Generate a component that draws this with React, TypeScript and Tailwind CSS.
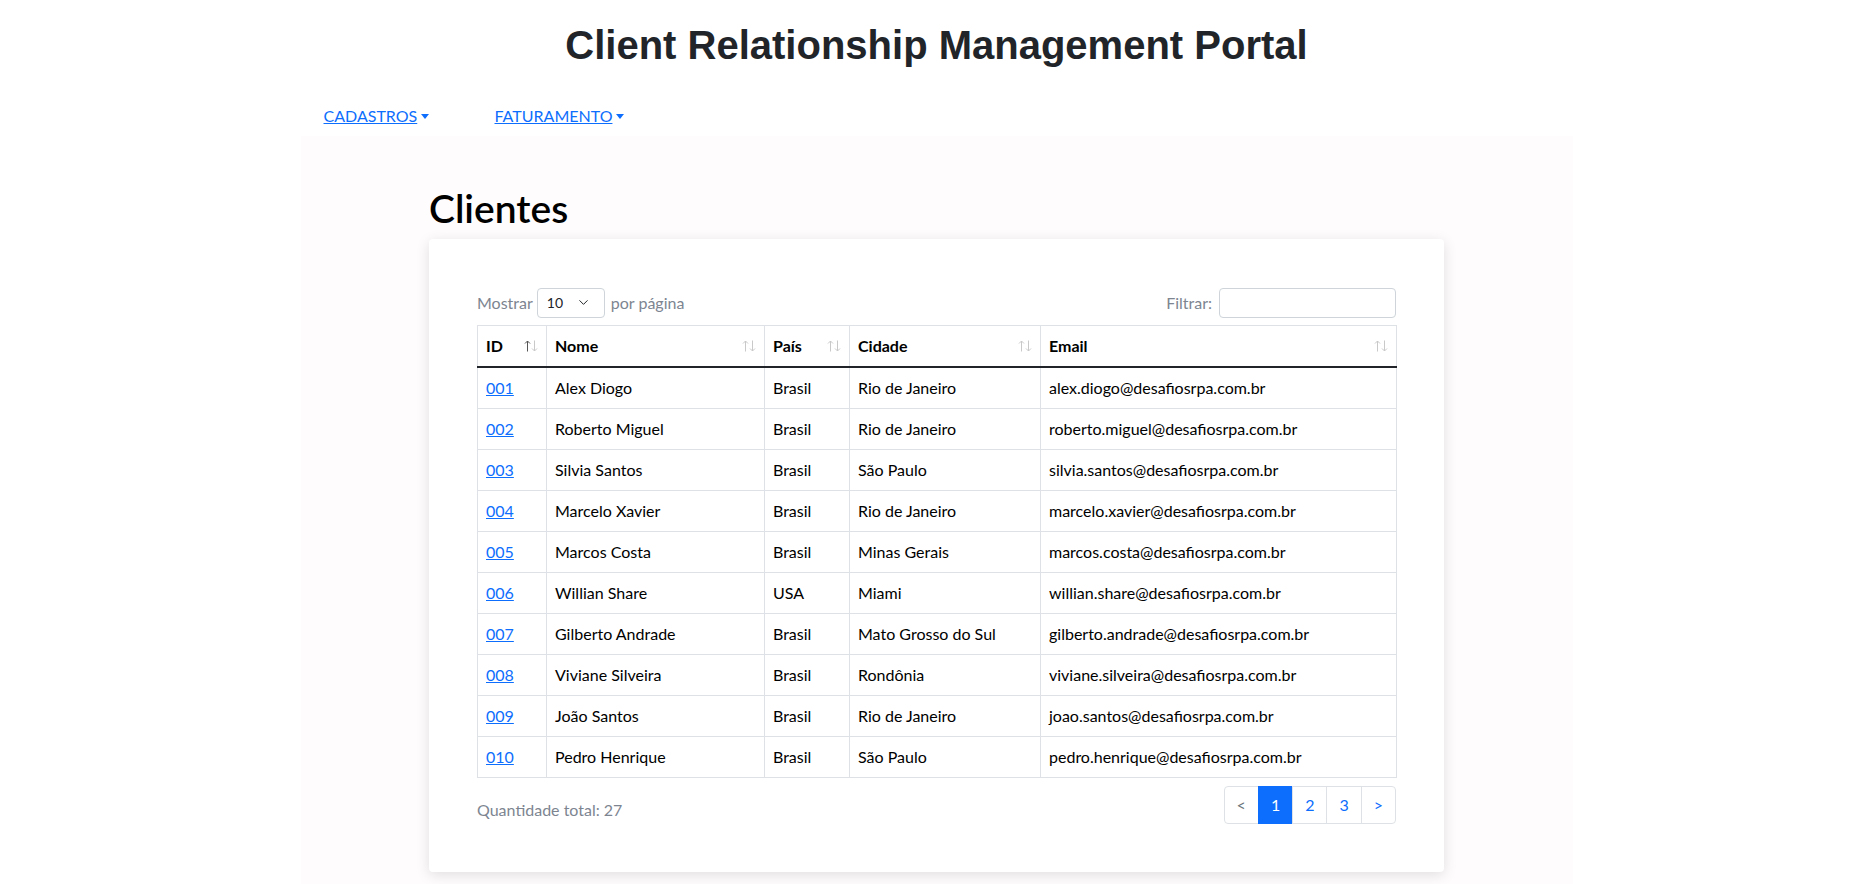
import { ChevronDown } from "lucide-react";

type Cliente = {
  id: string;
  nome: string;
  pais: string;
  cidade: string;
  email: string;
};

const clientes: Cliente[] = [
  { id: "001", nome: "Alex Diogo", pais: "Brasil", cidade: "Rio de Janeiro", email: "alex.diogo@desafiosrpa.com.br" },
  { id: "002", nome: "Roberto Miguel", pais: "Brasil", cidade: "Rio de Janeiro", email: "roberto.miguel@desafiosrpa.com.br" },
  { id: "003", nome: "Silvia Santos", pais: "Brasil", cidade: "São Paulo", email: "silvia.santos@desafiosrpa.com.br" },
  { id: "004", nome: "Marcelo Xavier", pais: "Brasil", cidade: "Rio de Janeiro", email: "marcelo.xavier@desafiosrpa.com.br" },
  { id: "005", nome: "Marcos Costa", pais: "Brasil", cidade: "Minas Gerais", email: "marcos.costa@desafiosrpa.com.br" },
  { id: "006", nome: "Willian Share", pais: "USA", cidade: "Miami", email: "willian.share@desafiosrpa.com.br" },
  { id: "007", nome: "Gilberto Andrade", pais: "Brasil", cidade: "Mato Grosso do Sul", email: "gilberto.andrade@desafiosrpa.com.br" },
  { id: "008", nome: "Viviane Silveira", pais: "Brasil", cidade: "Rondônia", email: "viviane.silveira@desafiosrpa.com.br" },
  { id: "009", nome: "João Santos", pais: "Brasil", cidade: "Rio de Janeiro", email: "joao.santos@desafiosrpa.com.br" },
  { id: "010", nome: "Pedro Henrique", pais: "Brasil", cidade: "São Paulo", email: "pedro.henrique@desafiosrpa.com.br" },
];

const columns = [
  { label: "ID", width: "w-[69px]", active: true },
  { label: "Nome", width: "w-[218px]", active: false },
  { label: "País", width: "w-[85px]", active: false },
  { label: "Cidade", width: "w-[191px]", active: false },
  { label: "Email", width: "w-[356px]", active: false },
];

function SortIcon({ active }: { active: boolean }) {
  const up = active ? "#555555" : "#c9c9c9";
  return (
    <svg width="14" height="12" viewBox="0 0 14 12" fill="none" strokeWidth="1">
      <path d="M3.5 11.5V1M1 3.5L3.5 1L6 3.5" stroke={up} />
      <path d="M10.5 0.5V11M8 8.5L10.5 11L13 8.5" stroke="#c9c9c9" />
    </svg>
  );
}

function NavItem({ label, className }: { label: string; className: string }) {
  return (
    <div className={className}>
      <a href="#" className="text-[#0d6efd] underline">
        {label}
      </a>
      <span className="ml-[4px] inline-block border-x-[4px] border-t-[5px] border-x-transparent border-t-[#0d6efd] align-[3px]" />
    </div>
  );
}

export default function App() {
  return (
    <div className="min-h-screen bg-white text-[#212529] font-['Lato','Noto_Sans',sans-serif]">
      <header>
        <h1 className="pt-[21px] text-center font-['Liberation_Sans',Arial,sans-serif] text-[40px] leading-[48px] font-bold text-[#212529]">
          Client Relationship Management Portal
        </h1>
        <nav className="mx-auto mt-[27px] flex w-[1272px] py-2 text-[16px] leading-6">
          <NavItem label="CADASTROS" className="ml-[23px] w-[171px]" />
          <NavItem label="FATURAMENTO" className="" />
        </nav>
      </header>

      <main className="mx-auto min-h-[748px] w-[1272px] bg-[#fffcfd] pt-12 pb-12">
        <div className="mx-auto w-[1015px]">
          <h1 className="mb-[7px] text-[39px] leading-[48px] font-semibold text-black">Clientes</h1>

          <div className="rounded-[4px] bg-white p-12 shadow-[0_3px_14px_rgba(0,0,0,0.12)]">
            <div className="mb-[7px] flex h-[31px] items-center justify-between text-[16px] text-[#7d8591]">
              <div className="flex items-center">
                <span>Mostrar</span>
                <div className="ml-[4px] mr-[6px] flex h-[30px] w-[68px] items-center justify-between rounded-[4px] border border-[#ced4da] pl-[9px] pr-[13px] text-[14px] text-[#212529]">
                  <span>10</span>
                  <ChevronDown size={15} strokeWidth={1.6} />
                </div>
                <span>por página</span>
              </div>
              <div className="flex items-center">
                <span className="mr-[7px]">Filtrar:</span>
                <input className="h-[30px] w-[177px] rounded-[4px] border border-[#ced4da] bg-white outline-none" />
              </div>
            </div>

            <table className="w-[919px] table-fixed border-collapse text-[16px] leading-6">
              <colgroup>
                {columns.map((c) => (
                  <col key={c.label} className={c.width} />
                ))}
              </colgroup>
              <thead>
                <tr className="border-b-2 border-b-[#212529]">
                  {columns.map((c) => (
                    <th key={c.label} className="border-x border-t border-[#dee2e6] p-2 text-left font-bold text-black">
                      <div className="flex items-center justify-between">
                        <span>{c.label}</span>
                        <SortIcon active={c.active} />
                      </div>
                    </th>
                  ))}
                </tr>
              </thead>
              <tbody>
                {clientes.map((c) => (
                  <tr key={c.id} className="text-black">
                    <td className="border border-[#dee2e6] p-2">
                      <a href="#" className="text-[#0d6efd] underline">
                        {c.id}
                      </a>
                    </td>
                    <td className="border border-[#dee2e6] p-2">{c.nome}</td>
                    <td className="border border-[#dee2e6] p-2">{c.pais}</td>
                    <td className="border border-[#dee2e6] p-2">{c.cidade}</td>
                    <td className="border border-[#dee2e6] p-2">{c.email}</td>
                  </tr>
                ))}
              </tbody>
            </table>

            <div className="mt-[8px] flex items-end justify-between">
              <span className="pb-[2px] text-[16px] leading-6 text-[#7d8591]">Quantidade total: 27</span>
              <div className="flex text-[16px] leading-6">
                <span className="rounded-l-[4px] border border-[#dee2e6] px-3 py-[6px] text-[#6c757d]">&lt;</span>
                <span className="-ml-px border border-[#0d6efd] bg-[#0d6efd] px-3 py-[6px] text-white">1</span>
                <span className="-ml-px border border-[#dee2e6] px-3 py-[6px] text-[#0d6efd]">2</span>
                <span className="-ml-px border border-[#dee2e6] px-3 py-[6px] text-[#0d6efd]">3</span>
                <span className="-ml-px rounded-r-[4px] border border-[#dee2e6] px-3 py-[6px] text-[#0d6efd]">&gt;</span>
              </div>
            </div>
          </div>
        </div>
      </main>
    </div>
  );
}
